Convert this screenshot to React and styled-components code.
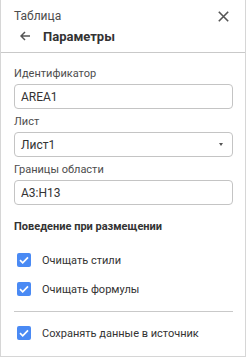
import React, { useState } from "react";
import styled, { createGlobalStyle } from "styled-components";

const GlobalStyle = createGlobalStyle`
  html, body {
    margin: 0;
    padding: 0;
    background: #fff;
    font-family: Roboto, "Noto Sans", "Liberation Sans", sans-serif;
  }
`;

const Panel = styled.div`
  box-sizing: border-box;
  width: 246px;
  height: 357px;
  border: 1px solid #d6d6d6;
  border-top: none;
  background: #fff;
  display: flex;
  flex-direction: column;
`;

const Header = styled.div`
  padding: 8px 13px 6px 13px;
  border-bottom: 1px solid #c9c9c9;
`;

const TopRow = styled.div`
  display: flex;
  align-items: center;
  justify-content: space-between;
  height: 16px;
`;

const Caption = styled.span`
  font-size: 12px;
  color: #4d4d4d;
`;

const IconButton = styled.button`
  border: none;
  background: none;
  padding: 0;
  margin-right: 2px;
  width: 14px;
  height: 14px;
  display: flex;
  align-items: center;
  justify-content: center;
  cursor: pointer;
`;

const TitleRow = styled.div`
  display: flex;
  align-items: center;
  height: 20px;
  margin-top: 2px;
  padding-left: 6px;
  gap: 13px;
`;

const Title = styled.span`
  font-size: 13px;
  font-weight: 700;
  color: #333;
`;

const Body = styled.div`
  padding: 0 12px 0 13px;
  display: flex;
  flex-direction: column;
`;

const Label = styled.div`
  font-size: 11px;
  line-height: 14px;
  color: #4d4d4d;
  margin-top: ${(p) => p.top}px;
  margin-bottom: 3px;
`;

const Field = styled.div`
  box-sizing: border-box;
  height: 25px;
  border: 1px solid #c4c4c4;
  border-radius: 4px;
  display: flex;
  align-items: center;
  justify-content: space-between;
  padding: 0 9px 0 6px;
  font-size: 12px;
  color: #333;
`;

const Caret = styled.span`
  width: 0;
  height: 0;
  border-left: 2.5px solid transparent;
  border-right: 2.5px solid transparent;
  border-top: 3px solid #555;
`;

const Section = styled.div`
  margin-top: 15px;
  font-size: 11px;
  line-height: 14px;
  font-weight: 700;
  color: #333;
`;

const CheckRow = styled.label`
  display: flex;
  align-items: center;
  gap: 11px;
  height: 14px;
  padding-left: 3px;
  margin-top: ${(p) => p.top}px;
  font-size: 11px;
  color: #333;
  cursor: pointer;
`;

const Box = styled.span`
  width: 14px;
  height: 14px;
  border-radius: 2px;
  background: ${(p) => (p.on ? "#4a8af4" : "#fff")};
  border: ${(p) => (p.on ? "none" : "1px solid #888")};
  box-sizing: border-box;
  display: flex;
  align-items: center;
  justify-content: center;
`;

const Divider = styled.div`
  height: 1px;
  background: #c9c9c9;
  margin-top: 15px;
`;

const Check = ({ label, top }) => {
  const [on, setOn] = useState(true);
  return (
    <CheckRow top={top} onClick={() => setOn(!on)}>
      <Box on={on}>
        {on && (
          <svg width="10" height="8" viewBox="0 0 10 8">
            <path d="M1 4.2 L3.7 6.8 L9 1.3" fill="none" stroke="#fff" strokeWidth="1.7" />
          </svg>
        )}
      </Box>
      {label}
    </CheckRow>
  );
};

const App = () => {
  return (
    <>
      <GlobalStyle />
      <Panel>
        <Header>
          <TopRow>
            <Caption>Таблица</Caption>
            <IconButton>
              <svg width="11" height="11" viewBox="0 0 11 11">
                <path d="M0.8 0.8 L10.2 10.2 M10.2 0.8 L0.8 10.2" stroke="#555" strokeWidth="1.6" />
              </svg>
            </IconButton>
          </TopRow>
          <TitleRow>
            <svg width="10" height="10" viewBox="0 0 10 10">
              <path d="M10 5 H1.5 M5 1 L1 5 L5 9" fill="none" stroke="#555" strokeWidth="1.5" />
            </svg>
            <Title>Параметры</Title>
          </TitleRow>
        </Header>
        <Body>
          <Label top={14}>Идентификатор</Label>
          <Field>AREA1</Field>
          <Label top={6}>Лист</Label>
          <Field>
            Лист1
            <Caret />
          </Field>
          <Label top={6}>Границы области</Label>
          <Field>A3:H13</Field>
          <Section>Поведение при размещении</Section>
          <Check top={19} label="Очищать стили" />
          <Check top={15} label="Очищать формулы" />
          <Divider />
          <Check top={14} label="Сохранять данные в источник" />
        </Body>
      </Panel>
    </>
  );
};

export default App;
